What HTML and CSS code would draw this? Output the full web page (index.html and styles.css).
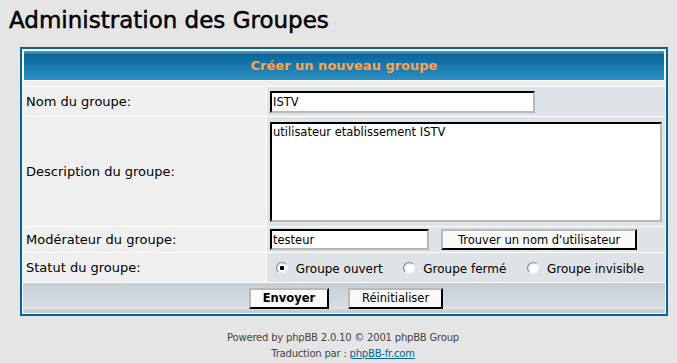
FILE: index.html
```html
<!DOCTYPE html>
<html lang="fr">
<head>
  <meta charset="UTF-8">
  <title>Administration des Groupes</title>
  <link rel="stylesheet" href="styles.css">
</head>
<body>
  <h1>Administration des Groupes</h1>

  <!-- Formulaire de création de groupe -->
  <form class="groupForm" action="#">
    <table class="forumline">
      <tr>
        <th class="thHead" colspan="2">Créer un nouveau groupe</th>
      </tr>
      <tr class="rowSpacer">
        <td class="row1" colspan="2"></td>
      </tr>
      <tr class="rowName">
        <td class="row1 label"><span class="gen">Nom du groupe:</span></td>
        <td class="row2"><input class="post nameInput" type="text" value="ISTV"></td>
      </tr>
      <tr class="rowDesc">
        <td class="row1 label"><span class="gen">Description du groupe:</span></td>
        <td class="row2"><textarea class="post descInput">utilisateur etablissement ISTV</textarea></td>
      </tr>
      <tr class="rowMod">
        <td class="row1 label"><span class="gen">Modérateur du groupe:</span></td>
        <td class="row2">
          <input class="post modInput" type="text" value="testeur">
          <input class="button findBtn" type="button" value="Trouver un nom d'utilisateur">
        </td>
      </tr>
      <tr class="rowStatus">
        <td class="row1 label"><span class="gen">Statut du groupe:</span></td>
        <td class="row2 radios">
          <label class="radioItem"><input type="radio" name="status" checked> Groupe ouvert</label>
          <label class="radioItem"><input type="radio" name="status"> Groupe fermé</label>
          <label class="radioItem"><input type="radio" name="status"> Groupe invisible</label>
        </td>
      </tr>
      <tr class="rowButtons">
        <td class="catBottom" colspan="2">
          <input class="mainoption" type="submit" value="Envoyer">
          <input class="liteoption" type="reset" value="Réinitialiser">
        </td>
      </tr>
    </table>
  </form>

  <div class="copyright">
    Powered by phpBB 2.0.10 &copy; 2001 phpBB Group<br>
    Traduction par : <a href="#">phpBB-fr.com</a>
  </div>
</body>
</html>
```

FILE: styles.css
```css
body {
  margin: 0;
  padding: 7px 0 0 9px;
  background-color: #E5E5E5;
  font-family: "DejaVu Sans", Verdana, sans-serif;
  color: #000000;
}
h1 {
  margin: 0 0 14px 0;
  font-size: 23px;
  font-weight: normal;
  line-height: 26px;
  -webkit-text-stroke: 0.5px #000;
}
.groupForm {
  margin: 0 0 0 11px;
}
.forumline {
  width: 648px;
  background-color: #FFFFFF;
  border: 2px solid #006699;
  border-collapse: separate;
  border-spacing: 1px;
}
th.thHead {
  height: 29px;
  padding: 0;
  border: 1px solid #FFFFFF;
  border-bottom: 0;
  color: #FFA34F;
  font-size: 13px;
  font-weight: bold;
  background: linear-gradient(#4d8db1 0, #4d8db1 2px, #096799 3px, #1a7aad 55%, #2c8fc1 100%);
}
td {
  padding: 0 3px;
  font-size: 13px;
}
.row1 {
  background-color: #EFEFEF;
}
.row2 {
  background-color: #DEE3E7;
}
td.label {
  width: 238px;
}
.rowSpacer td {
  height: 5px;
  padding: 0;
}
.rowName td {
  height: 29px;
}
.rowDesc td {
  height: 109px;
}
.rowMod td {
  height: 25px;
}
.rowStatus td {
  height: 26px;
}
.rowButtons td {
  height: 30px;
}
input, textarea {
  font-family: "DejaVu Sans", Verdana, sans-serif;
  font-size: 11.5px;
  color: #000000;
  box-sizing: border-box;
  vertical-align: middle;
  margin: 0;
}
.post {
  background-color: #FFFFFF;
  border-style: solid;
  border-width: 2px;
  border-color: #000000 #B8B8B8 #B8B8B8 #000000;
  padding: 1px;
}
.nameInput {
  width: 265px;
  height: 22px;
}
.descInput {
  display: block;
  width: 392px;
  height: 100px;
  resize: none;
  overflow: hidden;
}
.modInput {
  width: 159px;
  height: 21px;
}
.button, .mainoption, .liteoption {
  background-color: #FAFAFA;
  border-style: solid;
  border-width: 2px;
  border-color: #B8B8B8 #000000 #000000 #B8B8B8;
  padding: 0 6px;
  height: 21px;
}
.findBtn {
  width: 196px;
  margin-left: 8px;
}
.mainoption {
  font-weight: bold;
  width: 80px;
  margin-left: 4px;
}
.liteoption {
  width: 95px;
  margin-left: 15px;
}
.radios {
  font-size: 12px;
  padding-top: 3px;
}
.radioItem {
  margin-left: 6px;
  margin-right: 11px;
}
.radioItem input {
  -webkit-appearance: none;
  appearance: none;
  width: 12px;
  height: 12px;
  margin: 0 4px 2px 0;
  border-radius: 50%;
  border: 1px solid;
  border-color: #8a8a8a #f4f4f4 #f4f4f4 #8a8a8a;
  background: radial-gradient(circle at 60% 60%, #ffffff 0, #ffffff 45%, #d6d6d6 80%);
}
.radioItem input:checked {
  background: radial-gradient(circle, #000000 0, #000000 2px, #ffffff 2.5px, #ffffff 45%, #d6d6d6 80%);
}
.catBottom {
  text-align: center;
  background: linear-gradient(#C6CED5 0, #D5DBE0 70%, #DEE3E7 88%, #C5CCD2 89%, #C5CCD2 100%);
}
.copyright {
  margin-top: 14px;
  text-align: center;
  font-size: 10px;
  line-height: 16px;
  letter-spacing: -0.2px;
  color: #444444;
}
.copyright a {
  color: #006699;
}
```
